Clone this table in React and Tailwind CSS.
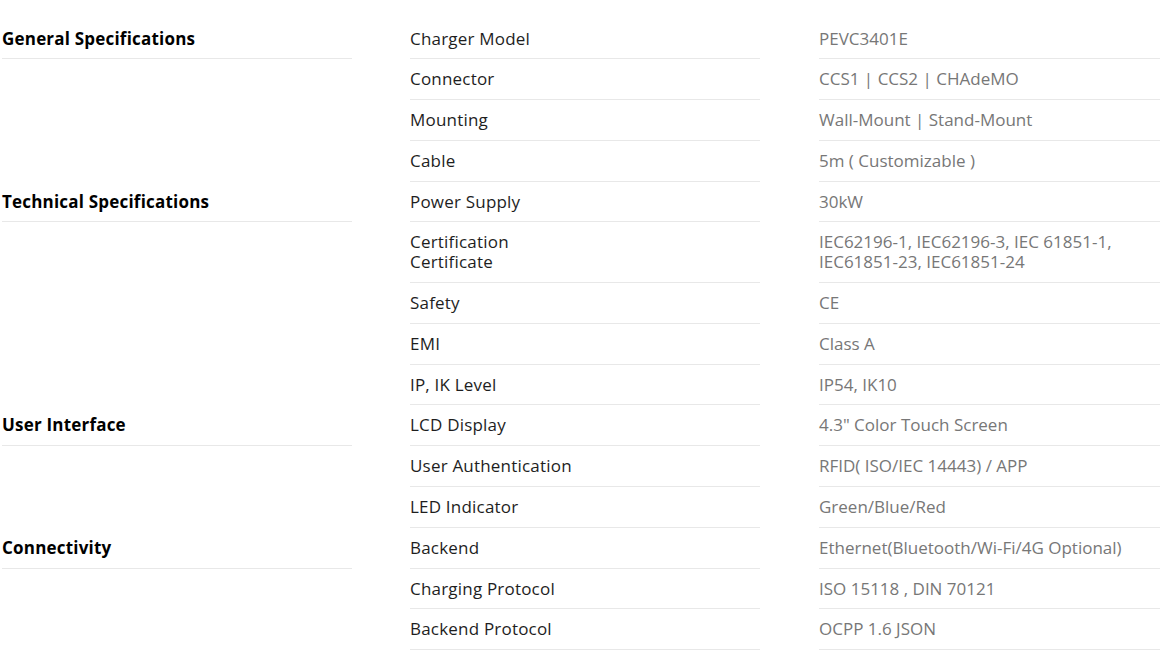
import React from 'react';

const groups = [
  {
    title: 'General Specifications',
    rows: [
      ['Charger Model', 'PEVC3401E'],
      ['Connector', 'CCS1 | CCS2 | CHAdeMO'],
      ['Mounting', 'Wall-Mount | Stand-Mount'],
      ['Cable', '5m ( Customizable )'],
    ],
  },
  {
    title: 'Technical Specifications',
    rows: [
      ['Power Supply', '30kW'],
      [['Certification', 'Certificate'], ['IEC62196-1, IEC62196-3, IEC 61851-1,', 'IEC61851-23, IEC61851-24']],
      ['Safety', 'CE'],
      ['EMI', 'Class A'],
      ['IP, IK Level', 'IP54, IK10'],
    ],
  },
  {
    title: 'User Interface',
    rows: [
      ['LCD Display', '4.3" Color Touch Screen'],
      ['User Authentication', 'RFID( ISO/IEC 14443) / APP'],
      ['LED Indicator', 'Green/Blue/Red'],
    ],
  },
  {
    title: 'Connectivity',
    rows: [
      ['Backend', 'Ethernet(Bluetooth/Wi-Fi/4G Optional)'],
      ['Charging Protocol', 'ISO 15118 , DIN 70121'],
      ['Backend Protocol', 'OCPP 1.6 JSON'],
    ],
  },
];

const Lines = ({ value }) =>
  Array.isArray(value) ? value.map((v) => <div key={v}>{v}</div>) : value;

export default function App() {
  return (
    <div
      className="w-full h-[658px] overflow-hidden bg-white text-[17px] leading-[19.8px]"
      style={{ fontFamily: '"Open Sans", "Noto Sans", sans-serif' }}
    >
      <div className="w-[1200px] pt-[18.5px] pl-[2px]">
        {groups.map((g) => (
          <div key={g.title} className="flex">
            <div className="w-[350px] shrink-0">
              <div className="py-[10px] border-b border-[#e8e8e8] font-bold text-black tracking-[0.2px]">{g.title}</div>
            </div>
            <div className="flex-1">
              {g.rows.map(([label, value], i) => (
                <div key={i} className="flex">
                  <div className="w-[350px] ml-[58px] shrink-0 py-[10px] border-b border-[#e8e8e8] text-[#1e1e1e] tracking-[0.2px]">
                    <Lines value={label} />
                  </div>
                  <div className="w-[350px] ml-[59px] shrink-0 py-[10px] border-b border-[#e8e8e8] text-[#777]">
                    <Lines value={value} />
                  </div>
                </div>
              ))}
            </div>
          </div>
        ))}
      </div>
    </div>
  );
}
